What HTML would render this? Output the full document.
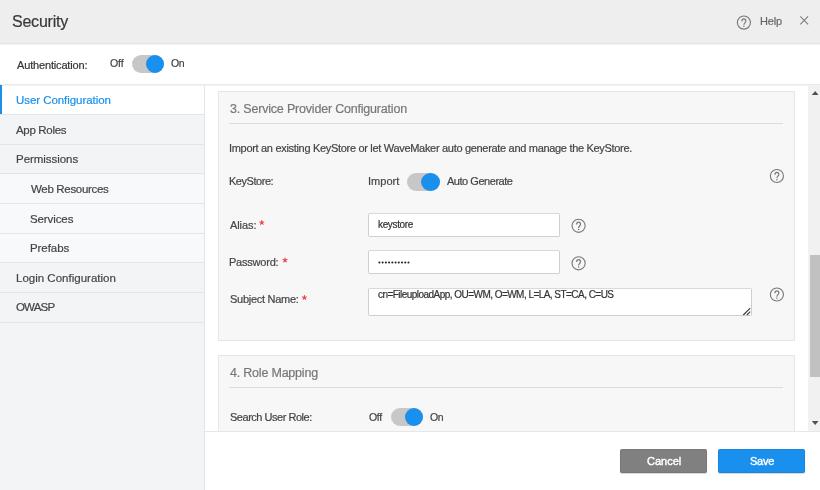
<!DOCTYPE html>
<html><head><meta charset="utf-8">
<style>
html,body{margin:0;padding:0;width:820px;height:490px;overflow:hidden;background:#fff;position:relative;font-family:"Liberation Sans",sans-serif;}
.a{position:absolute;white-space:nowrap;line-height:normal;will-change:transform;-webkit-text-stroke:0.2px currentColor;}
.b{position:absolute;}
.hdr{left:0;top:0;width:820px;height:43px;background:#eeeeee;border-bottom:1px solid #e2e2e2;box-shadow:0 1px 0 #f5f5f5;}
.side{left:0;top:85px;width:204px;height:405px;background:#f2f4f6;border-right:1px solid #dfe5ea;}
.topline{left:0;top:84px;width:820px;height:1px;background:#e6ebef;box-shadow:0 1px 0 #eff2f5;}
.item{left:0;width:204px;border-bottom:1px solid #e0e6ea;}
.sub{background:#f8f9fb;}
.panel{left:218px;width:575px;background:#f7f7f7;border:1px solid #e6e6e6;}
.hr{height:1px;background:#dcdcdc;}
.inp{background:#fff;border:1px solid #cfcfcf;border-top-color:#d9d9d9;border-radius:2px;box-sizing:border-box;}
.tog{width:32px;height:18px;border-radius:9px;background:#c8c6c6;}
.tog i{position:absolute;right:0;top:0;width:18px;height:18px;border-radius:50%;background:#1990ed;}
.btn{top:449px;height:24px;border-radius:2px;box-shadow:0 1px 1px rgba(0,0,0,.16), inset 0 0 0 1px rgba(0,0,0,.07);}
</style></head><body>
<div class="b hdr"></div>
<div class="b tog" style="left:132px;top:55px"><i></i></div>
<div class="b side"></div>
<div class="b item" style="top:85px;height:29px;background:#fff;"></div>
<div class="b item" style="top:115px;height:29px;"></div>
<div class="b item" style="top:145px;height:28px;"></div>
<div class="b item sub" style="top:174px;height:29px;"></div>
<div class="b item sub" style="top:204px;height:29px;"></div>
<div class="b item sub" style="top:234px;height:28px;"></div>
<div class="b item" style="top:263px;height:29px;"></div>
<div class="b item" style="top:293px;height:29px;"></div>
<div class="b topline"></div>
<div class="b" style="left:0;top:85px;width:2px;height:29px;background:#1990ed"></div>
<div class="b panel" style="top:91px;height:248px"></div>
<div class="b hr" style="left:229px;top:123px;width:554px"></div>
<div class="b tog" style="left:407px;top:173px;width:33px;height:18px;border-radius:9px"><i style="width:19px;height:18px"></i></div>
<div class="b inp" style="left:368px;top:213px;width:192px;height:24px"></div>
<div class="b inp" style="left:368px;top:250px;width:192px;height:24px"></div>
<div class="b inp" style="left:368px;top:288px;width:384px;height:28px"></div>
<div class="b panel" style="top:355px;height:100px"></div>
<div class="b hr" style="left:229px;top:387px;width:554px"></div>
<div class="b tog" style="left:391px;top:408px"><i></i></div>
<div class="b" style="left:808px;top:85px;width:12px;height:346px;background:#f1f1f1"></div>
<div class="b" style="left:810px;top:255px;width:10px;height:122px;background:#c1c1c1"></div>
<div class="b" style="left:205px;top:431px;width:615px;height:59px;background:#fff;border-top:1px solid #e2e8ec"></div>
<div class="b btn" style="left:620px;width:87px;background:#808080"></div>
<div class="b btn" style="left:718px;width:87px;background:#1990ed"></div>
<div class="a" style="left:12.40px;top:13.20px;font-size:16px;letter-spacing:-0.229px;color:#383838;">Security</div>
<div class="a" style="left:759.50px;top:15.00px;font-size:11px;letter-spacing:-0.167px;color:#666;">Help</div>
<div class="a" style="left:17.10px;top:58.70px;font-size:11px;letter-spacing:-0.164px;color:#333;">Authentication:</div>
<div class="a" style="left:110.00px;top:56.80px;font-size:10.5px;letter-spacing:-0.100px;color:#444;">Off</div>
<div class="a" style="left:171.30px;top:56.80px;font-size:10.5px;letter-spacing:-0.500px;color:#444;">On</div>
<div class="a" style="left:15.60px;top:94.00px;font-size:11.5px;letter-spacing:-0.059px;color:#1990ed;">User Configuration</div>
<div class="a" style="left:16.30px;top:123.50px;font-size:11.5px;letter-spacing:-0.325px;color:#444;">App Roles</div>
<div class="a" style="left:15.60px;top:152.90px;font-size:11.5px;letter-spacing:-0.040px;color:#444;">Permissions</div>
<div class="a" style="left:31.00px;top:182.90px;font-size:11.5px;letter-spacing:-0.317px;color:#444;">Web Resources</div>
<div class="a" style="left:29.60px;top:212.50px;font-size:11.5px;letter-spacing:-0.100px;color:#444;">Services</div>
<div class="a" style="left:29.60px;top:242.20px;font-size:11.5px;letter-spacing:-0.067px;color:#444;">Prefabs</div>
<div class="a" style="left:15.60px;top:271.80px;font-size:11.5px;letter-spacing:0.006px;color:#444;">Login Configuration</div>
<div class="a" style="left:16.30px;top:301.40px;font-size:11.5px;letter-spacing:-0.825px;color:#444;">OWASP</div>
<div class="a" style="left:229.90px;top:101.50px;font-size:12.5px;letter-spacing:-0.197px;color:#777;">3. Service Provider Configuration</div>
<div class="a" style="left:229.00px;top:141.80px;font-size:11px;letter-spacing:-0.311px;color:#444;">Import an existing KeyStore or let WaveMaker auto generate and manage the KeyStore.</div>
<div class="a" style="left:229.00px;top:174.80px;font-size:11px;letter-spacing:-0.462px;color:#444;">KeyStore:</div>
<div class="a" style="left:367.80px;top:174.90px;font-size:11px;letter-spacing:0.040px;color:#444;">Import</div>
<div class="a" style="left:447.20px;top:174.90px;font-size:11px;letter-spacing:-0.467px;color:#444;">Auto Generate</div>
<div class="a" style="left:229.90px;top:218.70px;font-size:11px;letter-spacing:-0.080px;color:#444;">Alias:</div>
<div class="a" style="left:378.20px;top:219.40px;font-size:10px;letter-spacing:-0.350px;color:#333;">keystore</div>
<div class="a" style="left:228.90px;top:256.00px;font-size:11px;letter-spacing:-0.213px;color:#444;">Password:</div>
<div class="a" style="left:230.00px;top:293.20px;font-size:11px;letter-spacing:-0.275px;color:#444;">Subject Name:</div>
<div class="a" style="left:378.20px;top:288.90px;font-size:10px;letter-spacing:-0.536px;color:#333;">cn=FileuploadApp, OU=WM, O=WM, L=LA, ST=CA, C=US</div>
<div class="a" style="left:229.90px;top:365.70px;font-size:12.5px;letter-spacing:-0.207px;color:#777;">4. Role Mapping</div>
<div class="a" style="left:230.00px;top:411.00px;font-size:11px;letter-spacing:-0.475px;color:#444;">Search User Role:</div>
<div class="a" style="left:368.60px;top:411.00px;font-size:10.5px;letter-spacing:-0.300px;color:#444;">Off</div>
<div class="a" style="left:429.80px;top:411.00px;font-size:10.5px;letter-spacing:-0.500px;color:#444;">On</div>
<div class="a" style="left:646.50px;top:454.80px;font-size:11px;letter-spacing:0.000px;color:#fff;-webkit-text-stroke:0.4px #fff;">Cancel</div>
<div class="a" style="left:749.90px;top:454.80px;font-size:11px;letter-spacing:-0.233px;color:#fff;-webkit-text-stroke:0.4px #fff;">Save</div>
<svg class="b" style="left:0;top:0" width="820" height="490">
<g fill="#787878" stroke="#787878"><g transform="translate(735.26 13.96) scale(0.72)"><circle cx="12" cy="12" r="9.1" fill="none" stroke-width="1.55"/><path d="M9.3 10.1C9.3 8.3 10.5 6.9 12 6.9S14.7 8.1 14.7 9.9C14.7 12.2 12 12.4 12 15.1" fill="none" stroke-width="1.6"/><circle cx="12" cy="17.1" r="1.05" stroke="none"/></g><g transform="translate(768.26 167.36) scale(0.72)"><circle cx="12" cy="12" r="9.1" fill="none" stroke-width="1.55"/><path d="M9.3 10.1C9.3 8.3 10.5 6.9 12 6.9S14.7 8.1 14.7 9.9C14.7 12.2 12 12.4 12 15.1" fill="none" stroke-width="1.6"/><circle cx="12" cy="17.1" r="1.05" stroke="none"/></g><g transform="translate(569.96 217.16) scale(0.72)"><circle cx="12" cy="12" r="9.1" fill="none" stroke-width="1.55"/><path d="M9.3 10.1C9.3 8.3 10.5 6.9 12 6.9S14.7 8.1 14.7 9.9C14.7 12.2 12 12.4 12 15.1" fill="none" stroke-width="1.6"/><circle cx="12" cy="17.1" r="1.05" stroke="none"/></g><g transform="translate(569.96 254.66) scale(0.72)"><circle cx="12" cy="12" r="9.1" fill="none" stroke-width="1.55"/><path d="M9.3 10.1C9.3 8.3 10.5 6.9 12 6.9S14.7 8.1 14.7 9.9C14.7 12.2 12 12.4 12 15.1" fill="none" stroke-width="1.6"/><circle cx="12" cy="17.1" r="1.05" stroke="none"/></g><g transform="translate(768.26 285.86) scale(0.72)"><circle cx="12" cy="12" r="9.1" fill="none" stroke-width="1.55"/><path d="M9.3 10.1C9.3 8.3 10.5 6.9 12 6.9S14.7 8.1 14.7 9.9C14.7 12.2 12 12.4 12 15.1" fill="none" stroke-width="1.6"/><circle cx="12" cy="17.1" r="1.05" stroke="none"/></g></g>
<path d="M800.3 16.4L808.1 24.3M808.1 16.4L800.3 24.3" stroke="#7c7c7c" stroke-width="1.05" fill="none"/>
<path d="M743.3 315L750.2 308.1M746.9 315L750.2 311.7" stroke="#3a3a3a" stroke-width="1.1" fill="none"/>
<path d="M261.80 222.60L261.80 220.50M261.80 222.60L263.80 221.95M261.80 222.60L263.03 224.30M261.80 222.60L260.57 224.30M261.80 222.60L259.80 221.95" stroke="#f23a3a" stroke-width="1.1" fill="none" stroke-linecap="round"/><path d="M285.00 260.20L285.00 258.10M285.00 260.20L287.00 259.55M285.00 260.20L286.23 261.90M285.00 260.20L283.77 261.90M285.00 260.20L283.00 259.55" stroke="#f23a3a" stroke-width="1.1" fill="none" stroke-linecap="round"/><path d="M304.40 297.60L304.40 295.50M304.40 297.60L306.40 296.95M304.40 297.60L305.63 299.30M304.40 297.60L303.17 299.30M304.40 297.60L302.40 296.95" stroke="#f23a3a" stroke-width="1.1" fill="none" stroke-linecap="round"/>
<g fill="#222"><circle cx="379.40" cy="262.5" r="1.05"/><circle cx="382.63" cy="262.5" r="1.05"/><circle cx="385.86" cy="262.5" r="1.05"/><circle cx="389.09" cy="262.5" r="1.05"/><circle cx="392.32" cy="262.5" r="1.05"/><circle cx="395.55" cy="262.5" r="1.05"/><circle cx="398.78" cy="262.5" r="1.05"/><circle cx="402.01" cy="262.5" r="1.05"/><circle cx="405.24" cy="262.5" r="1.05"/><circle cx="408.47" cy="262.5" r="1.05"/></g>
<path d="M811.8 95H818.5L815.2 91Z" fill="#505050"/>
<path d="M811.8 421H818.5L815.2 425Z" fill="#505050"/>
</svg>
</body></html>
